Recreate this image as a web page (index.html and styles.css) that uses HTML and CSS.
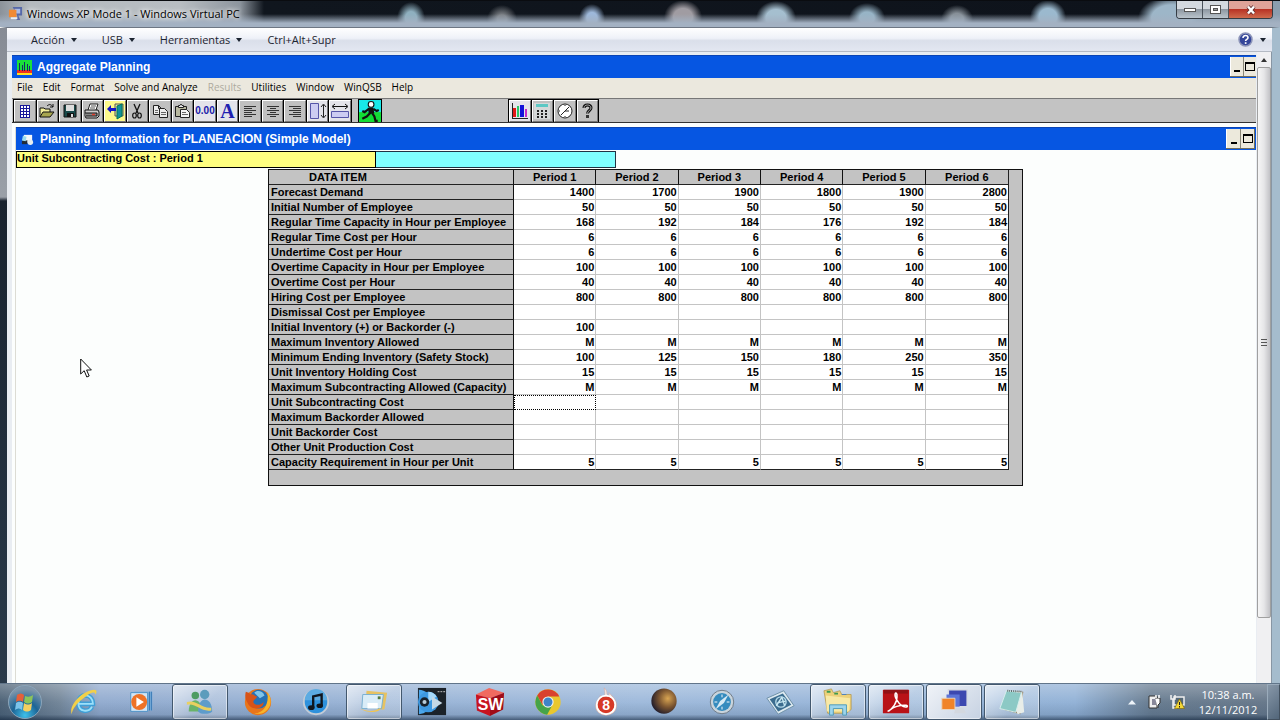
FILE: index.html
```html
<!DOCTYPE html>
<html lang="es">
<head>
<meta charset="utf-8">
<title>Windows XP Mode 1 - Windows Virtual PC</title>
<link rel="stylesheet" href="styles.css">
</head>
<body>
<header class="vpc-title">
  <svg class="vpc-icon" viewBox="0 0 16 16"><path d="M5 1h10v9h-4l2 5H9l1-4z" fill="#5668a8"/><path d="M7 3h6v5H7z" fill="#a9bbe8"/><path d="M1 4h8v8H1z" fill="#f08a35"/><path d="M3 12h7v2H3z" fill="#e9edf4"/></svg>
  <h1 class="vpc-name">Windows XP Mode 1 - Windows Virtual PC</h1>
  <div class="caption">
    <button class="cap" aria-label="Minimizar"><svg width="12" height="6"><rect x=".5" y="1.500" width="11" height="3" fill="#fff" stroke="#555"/></svg></button>
    <button class="cap" aria-label="Maximizar"><svg width="12" height="10"><rect x=".5" y=".5" width="10" height="8" fill="#fff" stroke="#555"/><rect x="3.500" y="3.500" width="4" height="2" fill="#999" stroke="#555"/></svg></button>
    <button class="cap close" aria-label="Cerrar"><svg width="12" height="10"><path d="M3 1.500l6 7M9 1.500l-6 7" stroke="#5b2a2a" stroke-width="4"/><path d="M3 1.500l6 7M9 1.500l-6 7" stroke="#fff" stroke-width="2.400"/></svg></button>
  </div>
</header>
<div class="frame">
  <nav class="vpc-menu">
    <button class="vm">Acción <i class="tri"></i></button>
    <button class="vm">USB <i class="tri"></i></button>
    <button class="vm">Herramientas <i class="tri"></i></button>
    <button class="vm">Ctrl+Alt+Supr</button>
    <button class="vm help" aria-label="Ayuda"><svg width="15" height="15"><circle cx="7.500" cy="7.500" r="6.500" fill="#34469a" stroke="#8b93b8" stroke-width="1.500"/><path d="M5 6c0-3.500 5-3 5-.3C10 7.500 7.600 7.300 7.600 9" fill="none" stroke="#fff" stroke-width="1.600"/><rect x="6.800" y="10.200" width="1.700" height="1.700" fill="#fff"/></svg><i class="tri"></i></button>
  </nav>
  <div class="guest">
    <main class="app">
      <div class="bar">
        <svg class="bar-icon" viewBox="0 0 16 16" shape-rendering="crispEdges"><path fill="#19e03a" d="M0 0h16v16H0z"/><path fill="#f03020" d="M0 11h16v3H0z"/><path fill="#ffe020" d="M0 14h16v2H0z"/><path d="M3 3v9M6 5v7M9 2v10M12 4v8M14 6v6" stroke="#13206a" stroke-width="1"/></svg>
        <h2 class="bar-name">Aggregate Planning</h2>
        <div class="xp flush"><button class="xpb" aria-label="Minimize"><i class="min"></i></button><button class="xpb" aria-label="Maximize"><i class="max"></i></button></div>
      </div>
      <nav class="menu">
        <button>File</button><button>Edit</button><button>Format</button><button>Solve and Analyze</button><button disabled>Results</button><button>Utilities</button><button>Window</button><button>WinQSB</button><button>Help</button>
      </nav>
      <div class="tools">
        <div class="group main-group">
          <button class="tool" aria-label="New"><svg viewBox="0 0 18 18" shape-rendering="crispEdges"><path fill="#fff" d="M4 3h10v12H4z"/><path d="M4.500 3v12M7.500 3v12M10.500 3v12M13.500 3v12M4 3.500h10M4 6.500h10M4 9.500h10M4 12.500h10M4 15.500h10" stroke="#17179a"/></svg></button>
          <button class="tool" aria-label="Open"><svg viewBox="0 0 18 18"><path d="M2 15V6h4l1 1h5v3" fill="#f3ef9a" stroke="#111"/><path d="M2 15l3-5h11l-4 5z" fill="#a8a650" stroke="#111"/><path d="M9 4c2-2 4-2 6 1M15 2v3h-3" fill="none" stroke="#111"/></svg></button>
          <button class="tool" aria-label="Save"><svg viewBox="0 0 18 18"><path d="M3 3h12v12H3z" fill="#184848" stroke="#111"/><path d="M5 3h8v6H5z" fill="#ddd"/><path d="M6 11h7v4H6z" fill="#111"/><path d="M10 12h2v3h-2z" fill="#ddd"/></svg></button>
          <button class="tool" aria-label="Print"><svg viewBox="0 0 18 18"><path d="M5 8l2-6h8l-2 6" fill="#fff" stroke="#222"/><path d="M8 4h5M7 6h5" stroke="#555"/><path d="M2 8h13l1 2v4l-2 2H3l-1-2z" fill="#ccc" stroke="#111"/><path d="M2 11h12v3H3" fill="#888" stroke="#111"/><path d="M9 12.500h3" stroke="#e04030" stroke-width="1.500"/></svg></button>
          <button class="tool yellow" aria-label="Exit"><svg viewBox="0 0 18 18"><path d="M9 2h8v12H9z" fill="#e9e5a0" stroke="#555"/><path d="M11 4l5-2v12l-5 3z" fill="#14909a" stroke="#075"/><path d="M1 7l4-4v3h5v3H5v2z" fill="#1414c8"/></svg></button>
          <button class="tool" aria-label="Cut"><svg viewBox="0 0 18 18"><path d="M6 2l4 9M12 2l-4 9" stroke="#111" stroke-width="1.300"/><ellipse cx="6.500" cy="13.500" rx="1.800" ry="2.500" fill="none" stroke="#111" stroke-width="1.200"/><ellipse cx="11.500" cy="13.500" rx="1.800" ry="2.500" fill="none" stroke="#111" stroke-width="1.200"/></svg></button>
          <button class="tool" aria-label="Copy"><svg viewBox="0 0 18 18"><path d="M2.500 3.500h5l3 3v6h-8zM7.500 3.500v3h3" fill="#eee" stroke="#222"/><path d="M8.500 6.500h5l3 3v6h-8z" fill="#eee" stroke="#222"/><path d="M10 10.500h5M10 12.500h5M4 8.500h3M4 10.500h3" stroke="#666"/></svg></button>
          <button class="tool" aria-label="Paste"><svg viewBox="0 0 18 18"><path d="M2.500 4.500h11v10h-11z" fill="#b9b9a0" stroke="#222"/><path d="M5.500 5.500v-2h1.500l1-1.500 1 1.500h1.500v2z" fill="#eee" stroke="#222"/><path d="M7.500 7.500h6l3 3v5h-9z" fill="#f4f4f4" stroke="#222"/><path d="M9 10.500h4M9 12.500h6" stroke="#666"/></svg></button>
          <button class="tool lite num">0.00</button>
          <button class="tool lite font">A</button>
          <button class="tool" aria-label="Align left"><svg viewBox="0 0 18 18" shape-rendering="crispEdges"><path d="M3 4.500h12M3 6.500h8M3 8.500h12M3 10.500h8M3 12.500h12M3 14.500h8" stroke="#333"/></svg></button>
          <button class="tool" aria-label="Center"><svg viewBox="0 0 18 18" shape-rendering="crispEdges"><path d="M3 4.500h12M6 6.500h6M3 8.500h12M6 10.500h6M3 12.500h12M6 14.500h6" stroke="#333"/></svg></button>
          <button class="tool" aria-label="Align right"><svg viewBox="0 0 18 18" shape-rendering="crispEdges"><path d="M3 4.500h12M7 6.500h8M3 8.500h12M7 10.500h8M3 12.500h12M7 14.500h8" stroke="#333"/></svg></button>
          <button class="tool lite" aria-label="Row height"><svg viewBox="0 0 18 18"><path d="M1.500 1.500h8v15h-8z" fill="#ccccf2" stroke="#5555a8"/><path d="M14.500 3v12M12 5l2.500-3L17 5M12 13l2.500 3 2.500-3" fill="none" stroke="#222"/></svg></button>
          <button class="tool lite" aria-label="Column width"><svg viewBox="0 0 18 18"><path d="M.5 9.500h17v6H.5z" fill="#ccccf2" stroke="#5555a8"/><path d="M2 4.500h14M4 2L1 4.500 4 7M14 2l3 2.500L14 7" fill="none" stroke="#111"/></svg></button>
        </div>
        <div class="group solve-group">
          <button class="tool solve" aria-label="Solve"><svg viewBox="0 0 20 20"><path d="M0 0h20v11H0z" fill="#18e8e8"/><path d="M0 11h20v9H0z" fill="#12dc35"/><circle cx="11" cy="4" r="2.600" fill="#fff" stroke="#111"/><path d="M8 7l5 0 1 5-5 1z" fill="#111"/><path d="M9 8l-4 3-2-1M13 8l3 2 2-1M10 12l-3 3-4 2M12 12l2 3 1 4 2 0" fill="none" stroke="#111" stroke-width="2"/></svg></button>
        </div>
        <div class="group view-group">
          <button class="tool lite" aria-label="Graph"><svg viewBox="0 0 18 18" shape-rendering="crispEdges"><path d="M1 1v15h16" fill="none" stroke="#222"/><path fill="#e01818" d="M2 6h3v9H2z"/><path fill="#28c868" d="M6 4h2v11H6z"/><path fill="#1212d8" d="M9 3h4v12H9z"/><path fill="#c42ac8" d="M14 7h2v8h-2z"/></svg></button>
          <button class="tool" aria-label="Calculator"><svg viewBox="0 0 18 18" shape-rendering="crispEdges"><path fill="#d4d8d8" d="M1 1h16v16H1z"/><path fill="#5cc8c4" d="M3 2h12v3H3z"/><path d="M4 8h2v2H4zM8 8h2v2H8zM12 8h2v2h-2zM4 11h2v2H4zM8 11h2v2H8zM12 11h2v2h-2zM4 14h2v2H4zM8 14h2v2H8zM12 14h2v2h-2z" fill="#222"/></svg></button>
          <button class="tool" aria-label="Clock"><svg viewBox="0 0 18 18"><circle cx="9" cy="9" r="7" fill="#fff" stroke="#222"/><path d="M9 9l4-4M9 9h4M9 9l-4 4M9 3v1M9 14v1M3 9h1" stroke="#222"/></svg></button>
          <button class="tool" aria-label="Help"><svg viewBox="0 0 18 18"><path d="M6 6c0-4 7-4 7 0 0 2.500-3.500 2.500-3.500 5.500" fill="none" stroke="#111" stroke-width="3"/><path d="M6 6c0-4 7-4 7 0 0 2.500-3.500 2.500-3.500 5.500" fill="none" stroke="#aaa"/><rect x="8" y="13" width="3" height="3" fill="#333"/></svg></button>
        </div>
      </div>
      <section class="child">
        <div class="bar">
          <svg class="bar-icon small" viewBox="0 0 14 14"><path d="M3 2h9v8H3z" fill="#f4f8fa"/><path d="M1 8h6v4H1z" fill="#222c38"/><path d="M2 3l4 1-1 5-4-1z" fill="#9adcf0"/><circle cx="10" cy="10" r="3" fill="#e8eef0"/></svg>
          <h2 class="bar-name">Planning Information for PLANEACION (Simple Model)</h2>
          <div class="xp"><button class="xpb" aria-label="Minimize"><i class="min"></i></button><button class="xpb" aria-label="Maximize"><i class="max"></i></button></div>
        </div>
        <div class="entry"><label for="cell">Unit Subcontracting Cost : Period 1</label><input id="cell" type="text"></div>
        <div class="grid">
          <table>
            <colgroup><col class="item"><col><col><col><col><col><col></colgroup>
            <thead><tr><th class="first">DATA ITEM</th><th>Period 1</th><th>Period 2</th><th>Period 3</th><th>Period 4</th><th>Period 5</th><th>Period 6</th></tr></thead>
            <tbody>
              <tr><th>Forecast Demand</th><td>1400</td><td>1700</td><td>1900</td><td>1800</td><td>1900</td><td>2800</td></tr>
              <tr><th>Initial Number of Employee</th><td>50</td><td>50</td><td>50</td><td>50</td><td>50</td><td>50</td></tr>
              <tr><th>Regular Time Capacity in Hour per Employee</th><td>168</td><td>192</td><td>184</td><td>176</td><td>192</td><td>184</td></tr>
              <tr><th>Regular Time Cost per Hour</th><td>6</td><td>6</td><td>6</td><td>6</td><td>6</td><td>6</td></tr>
              <tr><th>Undertime Cost per Hour</th><td>6</td><td>6</td><td>6</td><td>6</td><td>6</td><td>6</td></tr>
              <tr><th>Overtime Capacity in Hour per Employee</th><td>100</td><td>100</td><td>100</td><td>100</td><td>100</td><td>100</td></tr>
              <tr><th>Overtime Cost per Hour</th><td>40</td><td>40</td><td>40</td><td>40</td><td>40</td><td>40</td></tr>
              <tr><th>Hiring Cost per Employee</th><td>800</td><td>800</td><td>800</td><td>800</td><td>800</td><td>800</td></tr>
              <tr><th>Dismissal Cost per Employee</th><td></td><td></td><td></td><td></td><td></td><td></td></tr>
              <tr><th>Initial Inventory (+) or Backorder (-)</th><td>100</td><td></td><td></td><td></td><td></td><td></td></tr>
              <tr><th>Maximum Inventory Allowed</th><td>M</td><td>M</td><td>M</td><td>M</td><td>M</td><td>M</td></tr>
              <tr><th>Minimum Ending Inventory (Safety Stock)</th><td>100</td><td>125</td><td>150</td><td>180</td><td>250</td><td>350</td></tr>
              <tr><th>Unit Inventory Holding Cost</th><td>15</td><td>15</td><td>15</td><td>15</td><td>15</td><td>15</td></tr>
              <tr><th>Maximum Subcontracting Allowed (Capacity)</th><td>M</td><td>M</td><td>M</td><td>M</td><td>M</td><td>M</td></tr>
              <tr><th>Unit Subcontracting Cost</th><td class="focus"></td><td></td><td></td><td></td><td></td><td></td></tr>
              <tr><th>Maximum Backorder Allowed</th><td></td><td></td><td></td><td></td><td></td><td></td></tr>
              <tr><th>Unit Backorder Cost</th><td></td><td></td><td></td><td></td><td></td><td></td></tr>
              <tr><th>Other Unit Production Cost</th><td></td><td></td><td></td><td></td><td></td><td></td></tr>
              <tr><th>Capacity Requirement in Hour per Unit</th><td>5</td><td>5</td><td>5</td><td>5</td><td>5</td><td>5</td></tr>
            </tbody>
          </table>
        </div>
      </section>
    </main>
    <div class="scroll">
      <button class="up" aria-label="Scroll up"><i></i></button>
      <div class="thumb"><i></i></div>
      <div class="track"></div>
    </div>
  </div>
</div>
<footer class="taskbar">
  <button class="start" aria-label="Inicio"><svg viewBox="0 0 36 36"><defs><radialGradient id="orb" cx=".5" cy=".9" r=".8"><stop offset="0" stop-color="#3fc0ea"/><stop offset=".5" stop-color="#1c6596"/><stop offset="1" stop-color="#8096aa"/></radialGradient></defs><circle cx="18" cy="18" r="16.500" fill="url(#orb)" stroke="#8ba5ba"/><path d="M10 11c3-2 5-2 7 0l-1 7c-3-2-5-1-7 0z" fill="#e5603a"/><path d="M18 12c3 1 5 1 8-1l-1 7c-3 2-5 2-8 0z" fill="#8cc45a"/><path d="M9 19c2-1 4-2 7 0l-1 7c-2-2-4-2-7 0z" fill="#7cc4ea"/><path d="M17 19c3 2 5 2 8 0l-1 7c-3 2-5 2-8 0z" fill="#f4d060"/></svg></button>
  <button class="task" aria-label="Internet Explorer"><svg viewBox="0 0 32 32"><path d="M24.500 21c-3 6.500-14.500 6-14.500-4 0-11 15.500-11 15.500 1H11" fill="none" stroke="#3f9fd6" stroke-width="5"/><path d="M24.500 21c-3 6.500-14.500 6-14.500-4 0-11 15.500-11 15.500 1H11" fill="none" stroke="#9ce0fa" stroke-width="2"/><path d="M3 29C-1 20 14 4 27 3c3 0 3 3 1 5 0-4-5-2-10 2C9 16 3 24 3 29z" fill="#f3d048"/></svg></button>
  <button class="task" aria-label="Reproductor"><svg viewBox="0 0 32 32"><path d="M8 5h19v20H8z" fill="#78acd8"/><path d="M4 6h18v20H4z" fill="#d2e5f5" stroke="#4b91c8"/><path d="M24 5v20M26 5v20" stroke="#3878b4"/><circle cx="13" cy="16" r="8.500" fill="#ee7227"/><path d="M10 11l8 5-8 5z" fill="#fff"/></svg></button>
  <button class="task open" aria-label="Messenger"><svg viewBox="0 0 32 32"><circle cx="11" cy="9" r="4" fill="#4d9c63"/><path d="M4 26c0-16 14-16 14 0z" fill="#69b36a"/><circle cx="21" cy="8" r="5" fill="#5c9cbc"/><path d="M14 26c0-18 15-16 15 0-2 3-12 4-15 0z" fill="#5e9ccb"/><path d="M2 16c10-3 15 7 26 6v3c-11 2-16-8-26-6z" fill="#ead060"/></svg></button>
  <button class="task" aria-label="Firefox"><svg viewBox="0 0 32 32"><circle cx="16" cy="16" r="14" fill="#e8751b"/><circle cx="17" cy="13" r="10" fill="#2670b4"/><path d="M12 6c3-3 9-2 11 3l-5 3z" fill="#80c4e8"/><path d="M3 5c2 1 4 1 5 3 4-1 4 2 7 2-1 3-4 3-4 6 2 5 9 3 11 0 0 9-14 9-17 1C2 13 2 9 3 5z" fill="#d85318"/><path d="M26 5c5 7 5 16-2 21-4 3-9 3-12 2 10 0 16-9 14-23z" fill="#f7b52a"/></svg></button>
  <button class="task" aria-label="iTunes"><svg viewBox="0 0 32 32"><circle cx="16" cy="16" r="13" fill="#2e91dc" stroke="#c3ccd6" stroke-width="2"/><path d="M4 14a12 12 0 0124 0z" fill="#5cabe2"/><path d="M13 22V10l9-2v12" fill="none" stroke="#10161e" stroke-width="2.500"/><ellipse cx="11" cy="22" rx="3.500" ry="2.500" fill="#10161e"/><ellipse cx="20" cy="20" rx="3.500" ry="2.500" fill="#10161e"/></svg></button>
  <button class="task open" aria-label="Correo"><svg viewBox="0 0 32 32"><path d="M8 4l22 2-3 18-20-1z" fill="#e6c263"/><path d="M4 8h22l-2 15H3z" fill="#d9ecf7" stroke="#75aed0"/><path d="M9 17h11v6H9z" fill="#fff"/><rect x="20" y="10" width="3" height="3" fill="#53793d"/><path d="M1 23c9 4 16 3 22-1 0 5-13 7-22 1z" fill="#f1c551"/></svg></button>
  <button class="task" aria-label="DVD"><svg viewBox="0 0 32 32"><path d="M1 1h30v29H1z" fill="#1b2229"/><path d="M2 3a13 13 0 010 26z" fill="#4ba6ea"/><circle cx="12" cy="16" r="11" fill="#3d98e0"/><path d="M12 5a11 11 0 019 5L12 16z" fill="#a5d8fa"/><circle cx="8" cy="16" r="5" fill="#18212a"/><circle cx="8" cy="16" r="2.200" fill="#b7cbd8"/><path d="M16 10l11 7-11 7z" fill="#c5d8e5"/><path d="M22 5h8" stroke="#ccc" stroke-dasharray="2 1"/></svg></button>
  <button class="task" aria-label="SolidWorks"><svg viewBox="0 0 32 32"><path d="M1 8L15 1l16 5-15 6z" fill="#f06a60"/><path d="M1 8l15 4v19L2 25z" fill="#c81420"/><path d="M16 12l15-6-1 18-14 7z" fill="#a00c18"/><text x="3" y="25" class="sw">S</text><text x="14" y="25" class="sw">W</text></svg></button>
  <button class="task" aria-label="Chrome"><svg viewBox="0 0 32 32"><circle cx="16" cy="16" r="13.500" fill="#e9c72e"/><path d="M4.500 9A13.500 13.500 0 0128 10H16l-6 9z" fill="#d9412e"/><path d="M4.500 9A13.500 13.500 0 0015 29.500l5-9-10-1z" fill="#45a349"/><circle cx="16" cy="16" r="6" fill="#f2f2ee"/><circle cx="16" cy="16" r="4.800" fill="#3f84c8"/></svg></button>
  <button class="task" aria-label="Grabador"><svg viewBox="0 0 32 32"><path d="M14 1c5 4 1 7 5 9 1-1 0-3 0-4 5 5 9 9 8 15a11 9 0 01-22 0C5 14 9 13 10 9l2 4c4-4 3-8 2-12z" fill="#f4eee9" stroke="#d8a498" stroke-width=".6"/><circle cx="16" cy="19" r="9" fill="#d63826"/><circle cx="16" cy="19" r="10" fill="none" stroke="#fff" stroke-width="1.500"/><text x="12" y="25" class="eight">8</text></svg></button>
  <button class="task" aria-label="Eclipse"><svg viewBox="0 0 32 32"><defs><radialGradient id="moon" cx=".65" cy=".4" r=".7"><stop offset="0" stop-color="#d9a552"/><stop offset=".5" stop-color="#7a5430"/><stop offset="1" stop-color="#19172a"/></radialGradient></defs><circle cx="16" cy="15" r="13.500" fill="url(#moon)"/></svg></button>
  <button class="task" aria-label="Safari"><svg viewBox="0 0 32 32"><circle cx="16" cy="16" r="12.500" fill="#c9d4dc" stroke="#6c7883"/><circle cx="16" cy="16" r="9.500" fill="#358bbe"/><path d="M23 8l-5 9-9 7 5-9z" fill="#d5e9f4"/><path d="M16 8v3M16 21v3M8 16h3M21 16h3" stroke="#fff"/></svg></button>
  <button class="task" aria-label="Aplicación"><svg viewBox="0 0 32 32"><path d="M2 12l18-8 11 16-17 9z" fill="#dce9f0" stroke="#6b8ea5"/><path d="M5 13l14-6 9 12-14 7z" fill="#3b6c8e"/><circle cx="17" cy="16" r="5.500" fill="none" stroke="#b4d8e8" stroke-width="1.500"/><path d="M12 20l6-9 3 9M13 17l9-2" fill="none" stroke="#c8e8f2" stroke-width="1.500"/></svg></button>
  <button class="task open" aria-label="Explorador"><svg viewBox="0 0 32 32"><path d="M1 4l8-2 2 4 7-2 2 4h10v16l-5 4H5z" fill="#edd17a" stroke="#ab8e40" stroke-width=".7"/><path d="M3 9l26 3-1 14H4z" fill="#f8e9a6"/><path d="M4 5h4M12 7h4" stroke="#3c9a50" stroke-width="2"/><path d="M20 8h5" stroke="#4c80c0"/><path d="M7 30V19h18v11h-4v-7H11v7z" fill="#9dd5ec" stroke="#4b99b8"/></svg></button>
  <button class="task open" aria-label="Adobe Reader"><svg viewBox="0 0 32 32"><path d="M2 3h28v25H2z" fill="#b91217"/><path d="M3 3h26v4H3z" fill="#8f1115"/><path d="M7 26c5-2 11-10 10-18-1-4-4 0 0 6 3 5 7 8 11 7 2-3-14-2-20 5" fill="none" stroke="#fff" stroke-width="1.600"/></svg></button>
  <button class="task open active" aria-label="Windows Virtual PC"><svg viewBox="0 0 32 32"><path d="M10 3h20v18H10z" fill="#3c48b0" stroke="#d8dce4" stroke-width="1.500"/><path d="M18 22h8l3 6H16z" fill="#d3d8df"/><path d="M8 8h14v13H8z" fill="#5c74d8"/><path d="M3 12h14v12H3z" fill="#f08428" stroke="#ead5bd"/></svg></button>
  <button class="task open" aria-label="Bloc de notas"><svg viewBox="0 0 32 32"><path d="M11 4l17 1-3 24-19-5z" fill="#806f50"/><path d="M10 4l17 1 2 22-7 2z" fill="#e8ede8"/><path d="M10 4l16 2-6 21-17-4z" fill="#8cc9c5" stroke="#d9efed"/><path d="M11 4l16 1" stroke="#5c6868" stroke-width="2" stroke-dasharray="1 1"/></svg></button>
  <div class="tray">
    <button class="tb" aria-label="Mostrar iconos ocultos"><svg width="8" height="5"><path d="M0 4.500L4 0l4 4.500z" fill="#eef4fa"/></svg></button>
    <button class="tb" aria-label="Energía"><svg width="14" height="16"><path d="M1 2h8v12H1z" fill="#efefef" stroke="#333"/><path d="M4 5h4v6H4z" fill="#889"/><path d="M7 4h5v5l-2 2v3" fill="#fff" stroke="#333"/><path d="M8 1v3M11 1v3" stroke="#fff" stroke-width="1.500"/></svg></button>
    <button class="tb" aria-label="Red"><svg width="15" height="16"><path d="M4 3h10v8H4z" fill="#556878" stroke="#eee" stroke-width="1.500"/><path d="M1 1v4h4V1M3 5v9h4" fill="none" stroke="#f2f2f2" stroke-width="1.500"/><path d="M9.500 5l5 9.500h-10z" fill="#f3d735" stroke="#806a10" stroke-width=".7"/><path d="M9.500 8v3M9.500 12v1.500" stroke="#222"/></svg></button>
    <button class="clock"><span>10:38 a.m.</span><span>12/11/2012</span></button>
    <button class="desk" aria-label="Mostrar escritorio"></button>
  </div>
</footer>
<svg class="pointer" viewBox="0 0 12 20"><path d="M.7 1v15l3.500-3.300L6.800 19l2.400-1-2.600-6h4.800z" fill="#fff" stroke="#111"/></svg>
</body>
</html>
```
FILE: styles.css
```css
* { box-sizing: border-box; }
body {
  margin: 0; min-height: 100vh; display: flex; flex-direction: column;
  background: #fcfefd; color: #000;
  font: 11px/14px "Liberation Sans", sans-serif;
}
button { font: inherit; color: inherit; margin: 0; padding: 0; border: 0; background: none; display: flex; align-items: center; justify-content: center; }
h1, h2 { margin: 0; font-size: 12px; }
svg { display: block; }

/* host window */
.vpc-title {
  display: flex; align-items: flex-start; height: 27px; padding: 0 7px 0 8px;
  border-top: 1px solid #0a0c10;
  background:
    linear-gradient(to bottom, transparent 50%, #a3b1c2 85%),
    radial-gradient(ellipse 14px 16px at 411px 17px, #8fb0bf 40%, transparent),
    radial-gradient(ellipse 15px 14px at 502px 18px, #7d8186 30%, transparent),
    radial-gradient(ellipse 13px 14px at 592px 17px, #9db8da 40%, transparent),
    radial-gradient(ellipse 19px 17px at 683px 16px, #a09ca2 50%, transparent),
    radial-gradient(ellipse 20px 17px at 776px 17px, #a5bfcf 50%, transparent),
    radial-gradient(ellipse 18px 15px at 867px 17px, #97b4c6 40%, transparent),
    radial-gradient(ellipse 16px 14px at 957px 18px, #879098 40%, transparent),
    radial-gradient(ellipse 18px 17px at 1048px 16px, #9bb9ce 50%, transparent),
    radial-gradient(ellipse 34px 22px at 1172px 17px, #9db6c8 60%, transparent),
    linear-gradient(to right, #8b929a 0, #b4babf 30px, #b8bdc2 180px, #8c949d 240px, #10161e 264px, #0e131b 90%, #8b9eaf 94%);
}
.vpc-icon { width: 15px; height: 15px; margin-top: 5px; }
.vpc-name { margin: 5px 0 0 4px; font: 11px/16px "Open Sans", sans-serif; text-shadow: 0 0 4px #fff, 0 0 6px #fff; }
.caption { display: flex; margin-left: auto; border: 1px solid #353c44; border-top: 0; border-radius: 0 0 4px 4px; overflow: hidden; }
.cap { width: 26px; height: 17px; background: linear-gradient(#d3d9df 45%, #8e98a2 50%, #bac4cc); border-right: 1px solid #4a535c; }
.cap.close { width: 43px; border: 0; background: linear-gradient(#dfa399 45%, #b83325 50%, #cf6a4c); }

.frame {
  flex: 1; display: flex; flex-direction: column; border: solid; border-width: 1px 8px 0 7px;
  border-color: #6d7683 #a5bccd transparent transparent;
  background:
    linear-gradient(to right, #e9edf2 0 100%) padding-box,
    linear-gradient(to bottom, #868b94 0, #9aa0a8 170px, #18222e 174px, #2a3a4a 100%) border-box;
}
.vpc-menu { display: flex; align-items: center; height: 24px; padding: 0 6px 0 24px; gap: 25px; background: linear-gradient(#fff, #eef1f8 45%, #dadfea 55%, #e3e7f1); border-bottom: 1px solid #b4bac4; }
.vm { font: 11px/16px "Open Sans", sans-serif; color: #1c2430; gap: 6px; }
.help { margin-left: auto; gap: 7px; }
.tri { border: solid transparent; border-width: 4px 3px 0; border-top-color: #1c2430; }
.guest { flex: 1; display: flex; }
.app { flex: 1; min-width: 0; display: flex; flex-direction: column; margin: 3px 1px 0 5px; background: #fcfefd; }

/* title bars */
.bar { display: flex; align-items: center; height: 23px; padding-left: 4px; background: #0656e2; border-top: 1px solid #0a44b4; color: #fff; }
.bar-icon { width: 16px; height: 15px; margin-right: 5px; }
.bar-icon.small { width: 13px; height: 13px; margin: 0 6px 0 1px; }
.bar-name { font: bold 12px/16px "Liberation Sans", sans-serif; white-space: nowrap; }
.xp { display: flex; align-self: stretch; margin: 1px 1px 1px auto; background: #ece9dc; border-right: 1px solid #706d5c; border-bottom: 1px solid #706d5c; }
.xp.flush { margin-right: 0; border-right: 0; }
.xpb { width: 14px; border-left: 1px solid #fff; }
.flush .xpb { width: 13px; }
.xpb + .xpb { border-left-color: #8b8878; }
.min { width: 6px; height: 2px; margin-top: 8px; background: #000; }
.max { width: 10px; height: 9px; border: 1px solid #000; border-top-width: 2px; }

.menu { display: flex; align-items: center; gap: 10px; height: 20px; padding: 0 0 2px 5px; background: #ebe8de; font: 10px/14px "Open Sans", sans-serif; }
.menu button { white-space: nowrap; }
.menu button:disabled { color: #aeab9f; }

/* toolbar */
.tools { display: flex; height: 25px; padding-left: 1px; background: #c3c3c3; border-top: 1px solid #777; border-bottom: 1px solid #333; }
.group { display: flex; background: #000; padding-left: 1px; }
.main-group { width: 339px; }
.solve-group { width: 24px; margin-left: 6px; }
.view-group { width: 91px; margin-left: 126px; }
.tool { flex: 1; min-width: 0; background: #c0c0c0; border: 1px solid; border-color: #fff #777 #777 #fff; margin: 1px 1px 0 0; }
.tool svg { width: 18px; height: 18px; }
.tool.yellow { background: #fdf98c; }
.tool.lite { background: #e4e4ea; }
.tool.num { font: bold 10px/18px "Liberation Sans", sans-serif; color: #1818a8; overflow: hidden; }
.tool.font { font: bold 20px/18px "Liberation Serif", serif; color: #2020b0; }
.tool.solve { border: 0; }
.tool.solve svg { width: 22px; height: 22px; }

/* planning sheet */
.child { flex: 1; margin: 4px 0 0 3px; border-left: 1px solid #dcdcd4; }
.entry { display: flex; margin-top: 1px; font-weight: bold; }
.entry label { width: 360px; height: 17px; border: 1px solid #000; background: #ffff80; line-height: 13px; }
.entry input { width: 240px; height: 17px; border: 1px solid #234; border-left: 0; background: #80ffff; padding: 0 2px; font: inherit; outline: 0; }
.grid { width: 755px; margin: 1px 0 0 252px; background: #c3c3c3; border: 1px solid #111; padding: 0 13px 15px 0; }
table { width: 100%; table-layout: fixed; border-collapse: separate; border-spacing: 0; font-weight: bold; line-height: 14px; border-right: 1px solid #222; }
.item { width: 245px; }
th, td { height: 15px; padding: 0 1px 0 0; white-space: nowrap; overflow: hidden; }
th { padding: 0 2px; text-align: left; background: #c3c3c3; border-right: 1px solid #111; border-bottom: 1px solid #222; }
thead th { text-align: center; }
thead th.first { text-align: left; padding-left: 40px; }
thead th:last-child { border-right: 0; }
td { text-align: right; background: #fff; border-right: 1px solid #c4c4c4; border-bottom: 1px solid #c4c4c4; }
td:last-child { border-right: 0; }
tbody tr:last-child > * { border-bottom-color: #222; }
td.focus { border: 1px dotted #000; }

/* host scroll bar */
.scroll { width: 15px; display: flex; flex-direction: column; align-items: stretch; background: #f0f0f2; border-right: 1px solid #8896a4; }
.up { height: 15px; }
.up i { border: solid transparent; border-width: 0 3px 4px; border-bottom-color: #333; }
.thumb { flex: 550; display: flex; align-items: center; justify-content: center; border: 1px solid #a0a0a0; border-radius: 2px; background: linear-gradient(to right, #f6f6f6, #e6e6e8 50%, #c2c2c6); }
.thumb i { width: 6px; height: 7px; background: repeating-linear-gradient(#555 0 1px, transparent 1px 3px); }
.track { flex: 65; }

/* taskbar */
.taskbar {
  display: flex; height: 37px; border-top: 1px solid #61758a;
  background:
    linear-gradient(rgba(255,255,255,.25), transparent 50%, rgba(20,50,85,.15) 85%, rgba(10,30,55,.6)),
    linear-gradient(to right, #4e6377 0, #75889b 60px, #94add0 100px, #a0bbdc 50%, #94b3d7 84%, #6a7e92 90%, #69798b);
}
.start { width: 55px; padding-right: 6px; }
.start svg { width: 36px; height: 36px; }
.task { width: 58px; margin: 1px 0; }
.task svg { width: 30px; height: 30px; }
.task.open { width: 56px; margin: 0 1px; border: 1px solid #43586e; border-radius: 3px; background: linear-gradient(135deg, rgba(255,255,255,.65), rgba(255,255,255,.25) 60%); box-shadow: inset 0 0 0 1px rgba(255,255,255,.5); }
.task.active { background: linear-gradient(135deg, #f0f3f8, #c6d2e2); }
.sw { font: bold 17px "Liberation Sans", sans-serif; fill: #fff; }
.eight { font: bold 15px "Liberation Sans", sans-serif; fill: #fff; }
.tray { display: flex; align-items: center; margin-left: auto; }
.tb { width: 23px; }
.clock { flex-direction: column; width: 78px; font: 11px/15px "Open Sans", sans-serif; color: #fff; }
.desk { align-self: stretch; width: 13px; border: 1px solid #9aabbb; border-color: #9aabbb #42505e #42505e #9aabbb; background: linear-gradient(135deg, #8797a8, #52667a); }

/* mouse pointer floats over the sheet */
.pointer { position: absolute; left: 80px; top: 358px; width: 12px; height: 20px; }
```
